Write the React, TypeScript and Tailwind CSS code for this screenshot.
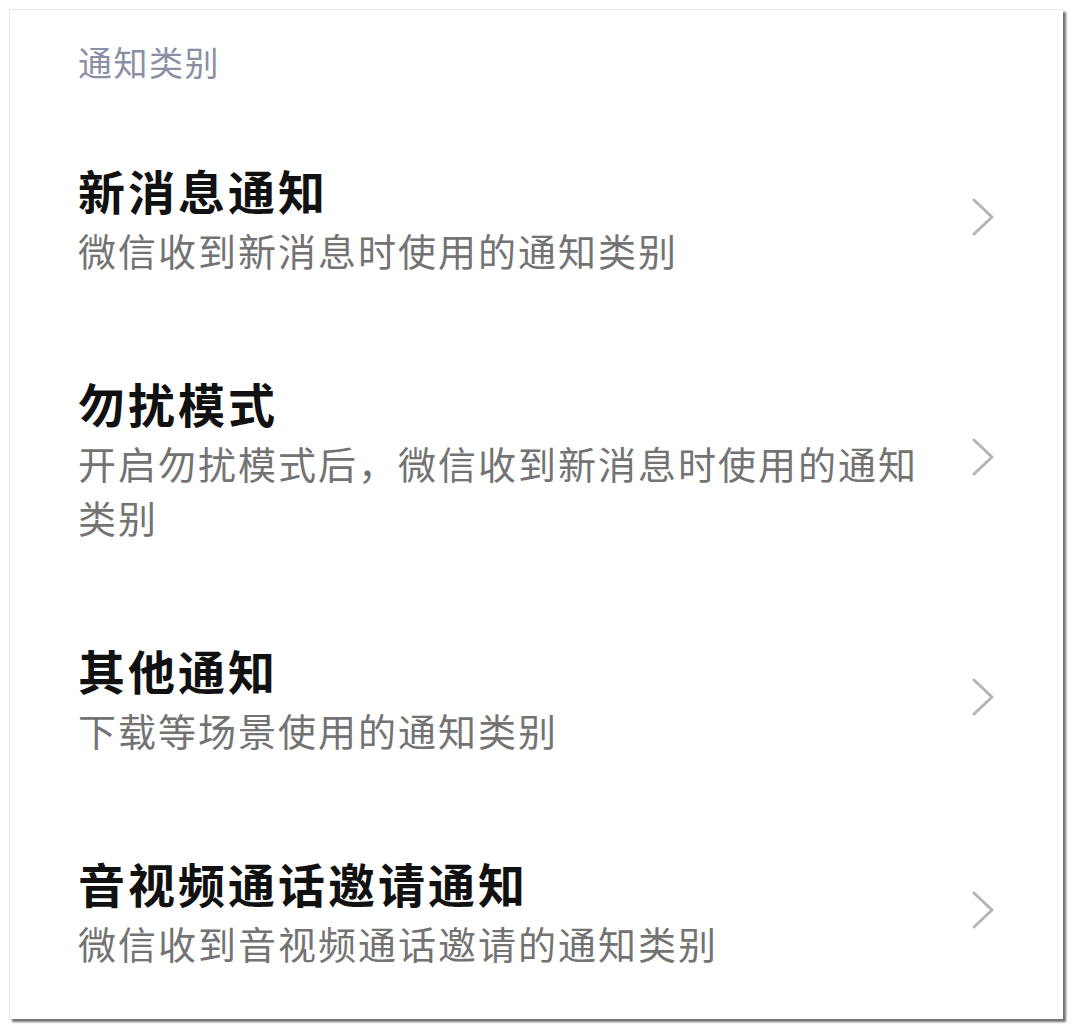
type Item = { title: string; desc: string };

const items: Item[] = [
  { title: "新消息通知", desc: "微信收到新消息时使用的通知类别" },
  { title: "勿扰模式", desc: "开启勿扰模式后，微信收到新消息时使用的通知类别" },
  { title: "其他通知", desc: "下载等场景使用的通知类别" },
  { title: "音视频通话邀请通知", desc: "微信收到音视频通话邀请的通知类别" },
];

const font = { fontFamily: '"Noto Sans CJK SC", "Noto Sans", sans-serif' };

const Chevron = () => (
  <svg width="22" height="38" viewBox="0 0 22 38" fill="none" aria-hidden>
    <polyline
      points="2,2 20,19 2,36"
      stroke="#b5b5b5"
      strokeWidth="3"
      strokeLinecap="round"
      strokeLinejoin="round"
    />
  </svg>
);

export default function App() {
  return (
    <div className="w-[1074px] h-[1029px] bg-white pt-[9px] pl-[9px]" style={font}>
      <div className="w-[1054px] h-[1010px] bg-white border-t border-l border-[#e6e6e6] shadow-[3px_3px_2px_rgba(0,0,0,0.55)]">
        <div className="pt-[30px] pl-[68px] h-[100px]">
          <p className="text-[34px] leading-[44px] tracking-[1.5px] text-[#8b8fa6]">通知类别</p>
        </div>
        {items.map((it) => (
          <div key={it.title} className="flex items-center pl-[68px] pr-[69px] pt-[47px] pb-[46px]">
            <div className="w-[852px]">
              <p className="text-[47px] leading-[66px] font-bold tracking-[3px] text-[#111111]">
                {it.title}
              </p>
              <p className="text-[38px] leading-[54px] tracking-[2px] text-[#737373]">{it.desc}</p>
            </div>
            <div className="flex-1 flex justify-end">
              <Chevron />
            </div>
          </div>
        ))}
      </div>
    </div>
  );
}
